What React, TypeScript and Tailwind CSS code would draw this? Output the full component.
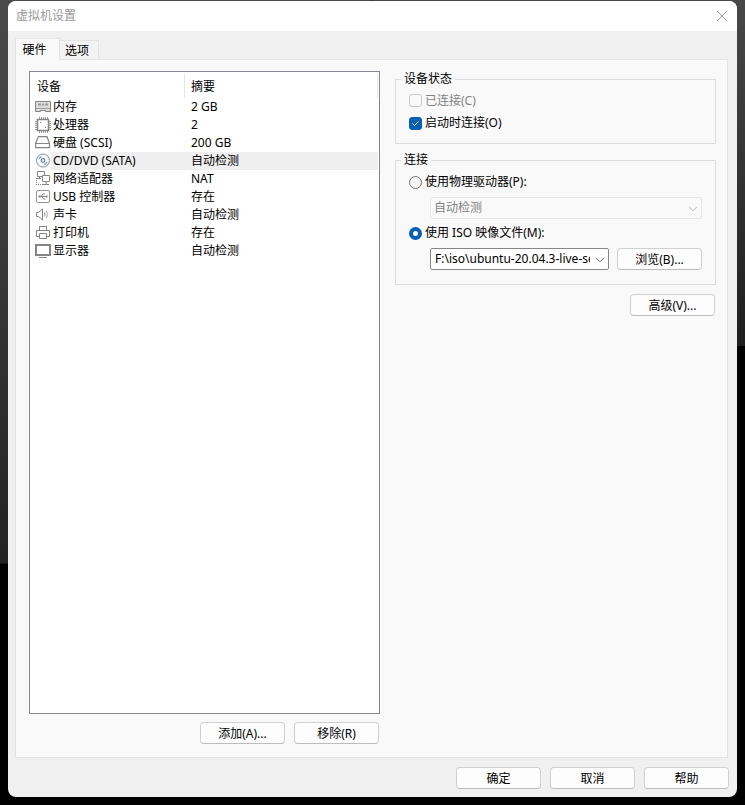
import { useState } from "react";
import type { ReactNode } from "react";
import clsx from "clsx";

function Icon({ children }: { children: ReactNode }) {
  return (
    <svg
      width="16"
      height="16"
      viewBox="0 0 16 16"
      fill="none"
      stroke="#858585"
      className="shrink-0"
      aria-hidden="true"
    >
      {children}
    </svg>
  );
}

const MemoryIcon = () => (
  <Icon>
    <path d="M0.5 2.5h15v10h-5v-1h-5v1h-5z" fill="#dcdcdc" />
    <path d="M1 9.5h14" stroke="#a0a0a0" />
    <path d="M3 5.5h3M7 5.5h2M10 5.5h3" strokeWidth="2" stroke="#9a9a9a" />
  </Icon>
);

const CpuIcon = () => (
  <Icon>
    <path d="M2.5 2.5h11v11h-11z" strokeWidth="1.5" />
    <path
      d="M4.5 0v2M6.5 0v2M8.5 0v2M10.5 0v2M12.5 0v2M4.5 14v2M6.5 14v2M8.5 14v2M10.5 14v2M12.5 14v2M0 4.5h2M0 6.5h2M0 8.5h2M0 10.5h2M0 12.5h2M14 4.5h2M14 6.5h2M14 8.5h2M14 10.5h2M14 12.5h2"
      stroke="#999"
    />
    <path d="M5 5.5h1M10 10.5h1" />
  </Icon>
);

const DiskIcon = () => (
  <Icon>
    <path d="M3.5 1.5h8.5l2.5 7v4H0.5v-4z" strokeWidth="1.25" />
    <path d="M0.5 8.5h14" />
  </Icon>
);

const DiscIcon = () => (
  <Icon>
    <circle cx="8" cy="7.5" r="6.5" stroke="#7790a8" fill="#fbfcfd" />
    <circle cx="8" cy="7.5" r="1.8" stroke="#5f82a3" strokeWidth="1.25" />
    <path
      d="M4 6A4.5 4.5 0 0 1 6.5 3.5M12 9A4.5 4.5 0 0 1 9.5 11.5"
      stroke="#86a9c8"
      strokeWidth="1.5"
    />
  </Icon>
);

const NetworkIcon = () => (
  <Icon>
    <path d="M2.5 0.5h7v5h-7zM1 7.5h5M4.5 6v1" />
    <path d="M7.5 4.5h7v6h-7z" fill="#fff" />
    <path d="M11 11v2M8 13.5h6" />
    <path d="M1.5 9v5M3 13.5h5" strokeDasharray="1 1" />
  </Icon>
);

const UsbIcon = () => (
  <Icon>
    <rect x="1.5" y="1.5" width="13" height="12" rx="1.5" stroke="#949494" />
    <path d="M4 7.5h8M6 7.5l2-2.5h2M7 7.5l1.5 2.5h2" />
    <path d="M3.5 7.5h2M11 7.5h1.5" strokeWidth="2" />
  </Icon>
);

const SoundIcon = () => (
  <Icon>
    <path d="M1.5 5.5h2L7.5 2v11L3.5 9.5h-2z" />
    <path d="M9.5 5.5q1 2 0 4" />
    <path d="M11.5 4q2 3.500 0 7" stroke="#aaa" />
  </Icon>
);

const PrinterIcon = () => (
  <Icon>
    <path d="M4.5 5.5v-4h7v4M4 11.5H1.5v-6h13v6H12" />
    <path d="M4.5 8.5h7v5h-7z" fill="#fff" />
  </Icon>
);

const DisplayIcon = () => (
  <Icon>
    <path d="M1 2h14v10H1z" strokeWidth="2" fill="#fff" />
    <path d="M4 14.5h8" />
  </Icon>
);

const devices = [
  { name: "内存", summary: "2 GB", icon: MemoryIcon },
  { name: "处理器", summary: "2", icon: CpuIcon },
  { name: "硬盘 (SCSI)", summary: "200 GB", icon: DiskIcon },
  { name: "CD/DVD (SATA)", summary: "自动检测", icon: DiscIcon },
  { name: "网络适配器", summary: "NAT", icon: NetworkIcon },
  { name: "USB 控制器", summary: "存在", icon: UsbIcon },
  { name: "声卡", summary: "自动检测", icon: SoundIcon },
  { name: "打印机", summary: "存在", icon: PrinterIcon },
  { name: "显示器", summary: "自动检测", icon: DisplayIcon },
];

function PushButton({ children }: { children: ReactNode }) {
  return (
    <button
      type="button"
      className="h-[22px] w-[85px] shrink-0 rounded-[4px] border border-[#d0d0d0] border-b-[#bcbcbc] bg-[#fdfdfd] pt-px leading-5 hover:bg-[#e5f1fb]"
    >
      {children}
    </button>
  );
}

function ComboBox({
  label,
  value,
  disabled,
}: {
  label: string;
  value: string;
  disabled?: boolean;
}) {
  return (
    <div className="relative min-w-0 flex-1">
      <select
        aria-label={label}
        disabled={disabled}
        className={clsx(
          "block h-[22px] w-full appearance-none rounded-[2px] border pr-[18px] opacity-100",
          disabled
            ? "border-[#e6e6e6] bg-[#f9f9f9] pl-[3px] text-[#838383]"
            : "border-[#868686] bg-white pl-1 text-black",
        )}
      >
        <option>{value}</option>
      </select>
      <svg
        width="10"
        height="6"
        viewBox="0 0 10 6"
        fill="none"
        stroke={disabled ? "#b5b5b5" : "#666"}
        className="pointer-events-none absolute top-[9px] right-1"
        aria-hidden="true"
      >
        <path d="M1 0.8l4 4 4-4" />
      </svg>
    </div>
  );
}

function GroupBox({
  title,
  className,
  children,
}: {
  title: string;
  className: string;
  children: ReactNode;
}) {
  return (
    <fieldset
      className={clsx("min-w-0 border border-[#dcdcdc] px-[13px]", className)}
    >
      <legend className="-ml-2 px-[3px] leading-4">{title}</legend>
      {children}
    </fieldset>
  );
}

function DeviceTable() {
  const [selected, setSelected] = useState(3);
  return (
    <div className="flex-1 border border-[#828790] bg-white pr-px">
      <table className="w-full table-fixed border-collapse text-left">
        <thead>
          <tr className="h-[26px]">
            <th className="w-[155px] p-0 font-normal">
              <div className="mt-px h-6 border-r border-[#e5e5e5] pl-[7px] leading-[26px]">
                设备
              </div>
            </th>
            <th className="p-0 font-normal">
              <div className="mt-px h-6 border-r border-[#e5e5e5] pl-[6px] leading-[26px]">
                摘要
              </div>
            </th>
          </tr>
        </thead>
        <tbody>
          {devices.map(({ name, summary, icon: DeviceIcon }, i) => (
            <tr key={name} className="h-[18px]" onClick={() => setSelected(i)}>
              <td className="p-0">
                <div className="flex items-center pl-[5px]">
                  <DeviceIcon />
                  <span
                    className={clsx(
                      "flex-1 pl-[2px] leading-[18px] whitespace-nowrap",
                      selected === i && "bg-[#efefef]",
                    )}
                  >
                    {name}
                  </span>
                </div>
              </td>
              <td
                className={clsx(
                  "py-0 pr-0 pl-[6px] leading-[18px]",
                  selected === i && "bg-[#efefef]",
                )}
              >
                {summary}
              </td>
            </tr>
          ))}
        </tbody>
      </table>
    </div>
  );
}

const checkClass =
  "block size-[13px] appearance-none rounded-[3px] border border-[#767676] bg-white checked:border-[#0560b4] checked:bg-[#0560b4] disabled:border-[#c8c8c8] disabled:bg-[#fafafa]";
const radioClass =
  "size-[13px] shrink-0 appearance-none rounded-full border border-[#767676] bg-[#f4f4f4] checked:border-4 checked:border-[#0560b4] checked:bg-white";

function DeviceStatus() {
  const [autoConnect, setAutoConnect] = useState(true);
  return (
    <GroupBox title="设备状态" className="h-[73px]">
      <div className="flex flex-col gap-1 pt-1">
        <label className="flex items-center gap-[3px] leading-[18px] text-[#838383]">
          <input type="checkbox" disabled className={checkClass} />
          <span className="pt-px">已连接(C)</span>
        </label>
        <label className="flex items-center gap-[3px] leading-[18px]">
          <span className="relative">
            <input
              type="checkbox"
              checked={autoConnect}
              onChange={(e) => setAutoConnect(e.target.checked)}
              className={checkClass}
            />
            {autoConnect && (
              <svg
                viewBox="0 0 13 13"
                fill="none"
                stroke="#fff"
                className="pointer-events-none absolute inset-0 size-[13px]"
                aria-hidden="true"
              >
                <path d="M3.5 6.5l2 2 4-4" />
              </svg>
            )}
          </span>
          <span>启动时连接(O)</span>
        </label>
      </div>
    </GroupBox>
  );
}

function Connection() {
  const [source, setSource] = useState("iso");
  return (
    <GroupBox title="连接" className="mt-2 h-[133px]">
      <div className="flex flex-col pt-[5px]">
        <label className="flex items-center gap-[3px] leading-[18px]">
          <input
            type="radio"
            name="source"
            checked={source === "physical"}
            onChange={() => setSource("physical")}
            className={radioClass}
          />
          使用物理驱动器(P):
        </label>
        <div className="mt-[6px] flex pl-[21px]">
          <ComboBox
            label="物理驱动器"
            value="自动检测"
            disabled={source !== "physical"}
          />
        </div>
        <label className="mt-[5px] flex items-center gap-[3px] leading-[18px]">
          <input
            type="radio"
            name="source"
            checked={source === "iso"}
            onChange={() => setSource("iso")}
            className={radioClass}
          />
          使用 ISO 映像文件(M):
        </label>
        <div className="mt-[6px] flex gap-2 pl-[21px]">
          <ComboBox
            label="ISO 映像文件"
            value="F:\iso\ubuntu-20.04.3-live-server-amd64.iso"
            disabled={source !== "iso"}
          />
          <PushButton>浏览(B)...</PushButton>
        </div>
      </div>
    </GroupBox>
  );
}

export default function App() {
  return (
    <div className="flex min-h-screen bg-black bg-[image:linear-gradient(#4a4a4a,#222),linear-gradient(#484848,#1e1e1e)] bg-[size:50%_70%,50%_43%] bg-[position:0_0,100%_0] bg-no-repeat px-2 pt-px pb-2 font-['Noto_Sans','Noto_Sans_CJK_SC',sans-serif] text-xs text-black">
      <main className="flex min-w-0 flex-1 flex-col overflow-hidden rounded-lg bg-[#f0f0f0]">
        <header className="flex h-[30px] items-center justify-between bg-white pr-[9px] pl-2">
          <h1 className="text-[#999]">虚拟机设置</h1>
          <button type="button" aria-label="关闭">
            <svg width="12" height="12" viewBox="0 0 12 12" stroke="#999">
              <path d="M1 1l10 10M11 1L1 11" />
            </svg>
          </button>
        </header>

        <div className="flex flex-1 flex-col pt-[7px] pr-[9px] pl-[7px]">
          <div role="tablist" className="z-10 -mb-px flex items-end">
            <button
              type="button"
              role="tab"
              aria-selected="true"
              className="h-[22px] w-[45px] border border-b-0 border-[#e3e3e3] bg-[#f9f9f9] pr-[6px]"
            >
              硬件
            </button>
            <button
              type="button"
              role="tab"
              aria-selected="false"
              className="h-5 w-[39px] border border-l-0 border-[#e3e3e3] bg-[#f3f3f3] pt-[2px] pr-[4px]"
            >
              选项
            </button>
          </div>

          <section className="grid flex-1 grid-cols-[351fr_321fr] gap-[15px] border border-[#e3e3e3] bg-[#f9f9f9] pt-[11px] pr-[11px] pb-[13px] pl-[13px]">
            <div className="flex flex-col gap-2">
              <DeviceTable />
              <div className="flex justify-end gap-[9px] pr-px">
                <PushButton>添加(A)...</PushButton>
                <PushButton>移除(R)</PushButton>
              </div>
            </div>
            <div className="min-w-0">
              <DeviceStatus />
              <Connection />
              <div className="mt-[9px] flex justify-end pr-px">
                <PushButton>高级(V)...</PushButton>
              </div>
            </div>
          </section>
        </div>

        <footer className="flex justify-end gap-[9px] pt-[9px] pr-2 pb-2">
          <PushButton>确定</PushButton>
          <PushButton>取消</PushButton>
          <PushButton>帮助</PushButton>
        </footer>
      </main>
    </div>
  );
}
